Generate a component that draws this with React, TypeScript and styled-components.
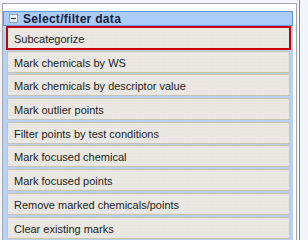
import React from "react";
import styled, { createGlobalStyle } from "styled-components";

const Global = createGlobalStyle`
  html, body { margin: 0; padding: 0; background: #f3f3fa; }
  #root { width: 308px; height: 240px; overflow: hidden; }
`;

const Frame = styled.div`
  box-sizing: border-box;
  width: 300px;
  height: 240px;
  padding: 3px 2px 0 2px;
  border-right: 1px solid #7c84a0;
  background: #f3f3fa;
`;

const Panel = styled.div`
  box-sizing: border-box;
  height: 237px;
  padding: 7px 3px 0 0;
  background: #ffffff;
  border: 1px solid #a4a4b0;
  border-bottom: none;
  display: flex;
  flex-direction: column;
`;

const Header = styled.div`
  box-sizing: border-box;
  height: 15px;
  display: flex;
  align-items: center;
  gap: 5px;
  padding-left: 4px;
  background: #acccf8;
  border: 1px solid #5e98e2;
  font-family: "Liberation Sans", Arial, sans-serif;
  font-weight: bold;
  font-size: 12px;
  letter-spacing: 0.3px;
  color: #14213f;
`;

const Toggle = styled.span`
  box-sizing: border-box;
  width: 9px;
  height: 9px;
  margin-left: 1px;
  border: 1px solid #8aa4c4;
  background: linear-gradient(#ffffff, #dce4ee);
  display: flex;
  align-items: center;
  justify-content: center;
  &::after {
    content: "";
    width: 5px;
    height: 1px;
    background: #303848;
  }
`;

const List = styled.div`
  flex: 1;
  display: flex;
  flex-direction: column;
  gap: 1.7px;
  padding: 1px 3px 0 4px;
  background: #b6d2f6;
`;

const Button = styled.div<{ $focused?: boolean }>`
  box-sizing: border-box;
  flex: none;
  height: 22px;
  display: flex;
  align-items: center;
  padding: 2px 0 0 6px;
  background-color: #ebe8e3;
  background-image: radial-gradient(#e4e1dc 0.6px, transparent 0.7px);
  background-size: 3px 3px;
  border: 1px solid #c9c3b6;
  font-family: "Liberation Sans", Arial, sans-serif;
  font-size: 11px;
  color: #1c1c1c;
  white-space: nowrap;
  ${(p) =>
    p.$focused &&
    `
    outline: 2px solid #c80008;
    outline-offset: -1px;
  `}
`;

const items = [
  "Subcategorize",
  "Mark chemicals by WS",
  "Mark chemicals by descriptor value",
  "Mark outlier points",
  "Filter points by test conditions",
  "Mark focused chemical",
  "Mark focused points",
  "Remove marked chemicals/points",
  "Clear existing marks",
];

export default function App() {
  return (
    <>
      <Global />
      <Frame>
        <Panel>
          <Header>
            <Toggle />
            <span>Select/filter data</span>
          </Header>
          <List>
            {items.map((t, i) => (
              <Button key={t} $focused={i === 0}>
                {t}
              </Button>
            ))}
          </List>
        </Panel>
      </Frame>
    </>
  );
}
